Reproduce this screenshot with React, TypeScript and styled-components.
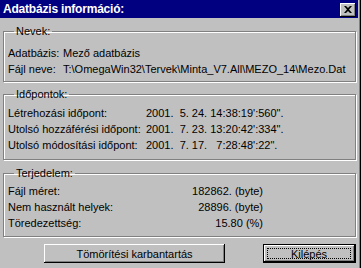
import styled, { createGlobalStyle } from "styled-components";

const GlobalStyle = createGlobalStyle`
  html, body {
    margin: 0;
    padding: 0;
    background: #c0c0c0;
  }
  body {
    font-family: "Liberation Sans", Arial, sans-serif;
    font-size: 11px;
    color: #000;
  }
`;

const Window = styled.div`
  width: 361px;
  height: 268px;
  box-sizing: border-box;
  background: #c0c0c0;
  box-shadow: inset -1px 0 0 #000, inset -2px 0 0 #808080;
  display: flex;
  flex-direction: column;
  overflow: hidden;
`;

const TitleBar = styled.div`
  height: 18px;
  margin-right: 3px;
  background: #000080;
  display: flex;
  align-items: center;
  justify-content: space-between;
  padding: 0 2px 0 3px;
`;

const Title = styled.span`
  color: #fff;
  font-weight: bold;
  font-size: 12px;
  letter-spacing: -0.2px;
`;

const CloseButton = styled.button`
  width: 16px;
  height: 14px;
  padding: 0;
  margin-top: 1px;
  background: #c0c0c0;
  border: none;
  box-shadow: inset -1px -1px 0 #000, inset 1px 1px 0 #fff,
    inset -2px -2px 0 #808080;
  display: flex;
  align-items: center;
  justify-content: center;
`;

const Content = styled.div`
  padding: 0 5px 0 3px;
  display: flex;
  flex-direction: column;
`;

const Group = styled.fieldset<{ $top: number; $pad: string }>`
  margin: ${(p) => p.$top}px 0 0 0;
  padding: ${(p) => p.$pad};
  border: 1px solid #808080;
  box-shadow: 1px 1px 0 #fff, inset 1px 1px 0 #fff;
  min-width: 0;
`;

const Legend = styled.legend`
  padding: 0 2px;
  margin-left: 6px;
  line-height: 13px;
`;

const Row = styled.div<{ $labelWidth: number }>`
  display: grid;
  grid-template-columns: ${(p) => p.$labelWidth}px auto;
  height: 16px;
  line-height: 16px;
  white-space: pre;
`;

const Value = styled.span<{ $right?: boolean }>`
  text-align: ${(p) => (p.$right ? "right" : "left")};
  width: ${(p) => (p.$right ? "117px" : "auto")};
`;

const ButtonRow = styled.div`
  display: flex;
  margin-top: 7px;
  padding-left: 41px;
`;

const Button = styled.button<{ $width: number; $default?: boolean; $gap?: number }>`
  width: ${(p) => p.$width}px;
  height: 19px;
  margin-left: ${(p) => p.$gap ?? 0}px;
  padding: 0;
  background: #c0c0c0;
  font-family: "Liberation Sans", Arial, sans-serif;
  font-size: 11px;
  color: #000;
  border: none;
  position: relative;
  box-shadow: ${(p) =>
    p.$default
      ? "inset 0 0 0 1px #000, inset -2px -2px 0 #000, inset 2px 2px 0 #fff, inset -3px -3px 0 #808080"
      : "inset -1px -1px 0 #000, inset 1px 1px 0 #fff, inset -2px -2px 0 #808080"};
`;

const FocusRing = styled.span`
  position: absolute;
  inset: 4px 5px 4px 4px;
  border: 1px dotted #000;
  display: flex;
  align-items: center;
  justify-content: center;
`;

export default function App() {
  return (
    <>
      <GlobalStyle />
      <Window>
        <TitleBar>
          <Title>Adatbázis információ:</Title>
          <CloseButton>
            <svg width="8" height="7" viewBox="0 0 8 7">
              <path
                d="M0 0h2l2 2 2-2h2L5 3.5 8 7H6L4 5 2 7H0l3-3.5z"
                fill="#000"
              />
            </svg>
          </CloseButton>
        </TitleBar>
        <Content>
          <Group $top={7} $pad="7px 4px 4px 4px">
            <Legend>Nevek:</Legend>
            <Row $labelWidth={55}>
              <span>Adatbázis:</span>
              <span>Mező adatbázis</span>
            </Row>
            <Row $labelWidth={55}>
              <span>Fájl neve:</span>
              <span>T:\OmegaWin32\Tervek\Minta_V7.All\MEZO_14\Mezo.Dat</span>
            </Row>
          </Group>
          <Group $top={6} $pad="4px 4px 6px 4px">
            <Legend>Időpontok:</Legend>
            <Row $labelWidth={138}>
              <span>Létrehozási időpont:</span>
              <span>2001.  5. 24. 14:38:19':560".</span>
            </Row>
            <Row $labelWidth={138}>
              <span>Utolsó hozzáférési időpont:</span>
              <span>2001.  7. 23. 13:20:42':334".</span>
            </Row>
            <Row $labelWidth={138}>
              <span>Utolsó módosítási időpont:</span>
              <span>2001.  7. 17.   7:28:48':22".</span>
            </Row>
          </Group>
          <Group $top={7} $pad="3px 4px 5px 4px">
            <Legend>Terjedelem:</Legend>
            <Row $labelWidth={138}>
              <span>Fájl méret:</span>
              <Value $right>182862. (byte)</Value>
            </Row>
            <Row $labelWidth={138}>
              <span>Nem használt helyek:</span>
              <Value $right>28896. (byte)</Value>
            </Row>
            <Row $labelWidth={138}>
              <span>Töredezettség:</span>
              <Value $right>15.80 (%)</Value>
            </Row>
          </Group>
          <ButtonRow>
            <Button $width={181}>Tömörítési karbantartás</Button>
            <Button $width={93} $gap={38} $default>
              <FocusRing>Kilépés</FocusRing>
            </Button>
          </ButtonRow>
        </Content>
      </Window>
    </>
  );
}
